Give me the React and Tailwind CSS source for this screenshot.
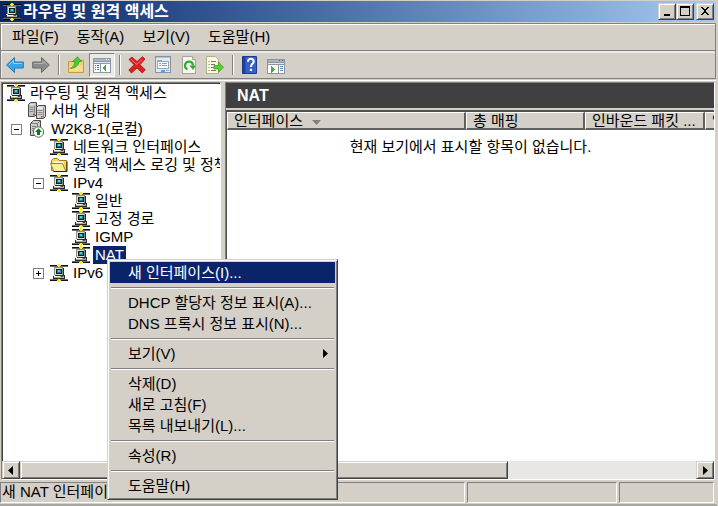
import { useState } from 'react';

const FONT = "font-['Liberation_Sans','Noto_Sans_CJK_KR',sans-serif]";
const RAISED =
  'bg-[#d4d0c8] border border-t-[#d4d0c8] border-l-[#d4d0c8] border-r-[#404040] border-b-[#404040] shadow-[inset_1px_1px_0_#fff,inset_-1px_-1px_0_#808080]';

function NodeIcon({ light }) {
  return (
    <svg viewBox="0 0 18 18" className="h-[18px] w-[18px] shrink-0" shapeRendering="crispEdges">
      <path d="M0 1h18v1H0zM0 16h18v1H0z" fill={light ? '#000' : '#111'} />
      <path d="M0 2h18v1H0zM0 15h18v1H0z" fill="#6e6e62" />
      <path d="M8 0h2v1H8zM7 1h4v1H7zM8 2h2v1H8zM8 15h2v1H8zM7 16h4v1H7zM8 17h2v1H8z" fill="#f8ec1c" />
      <path d="M4 3h9v1h1v7h1v4H3v-4h1z" fill="#2a2a2a" />
      <path d="M4 3h9v1H4zM4 4h1v7H4z" fill="#8d8d88" />
      <path d="M5 4h7v7H5z" fill="#dededa" />
      <path d="M12 4h1v7h-1z" fill="#8b8b86" />
      <path d="M6 5h6v5H6z" fill="#131a1a" />
      <path d="M7 6h4v3H7z" fill="#0c8c90" />
      <path d="M8 6h2v2H8z" fill="#35dcdc" />
      <path d="M4 12h10v2H4z" fill="#a9a9a4" />
      <path d="M3 11h2v1H3zM4 12h6v1H4z" fill="#f4f4f0" />
      <path d="M11 12h2v1h-2z" fill="#555" />
    </svg>
  );
}

function ServersIcon() {
  return (
    <svg viewBox="0 0 18 18" className="h-[18px] w-[18px] shrink-0">
      <path d="M.5 2.500l2-2h6v12l-2 2h-6z" fill="#c4c4c0" stroke="#4a4a4a" />
      <path d="M1 3.500h5.500v10M1.500 5.500h4M1.500 7.500h4M1.500 9.500h4" fill="none" stroke="#8a8a88" />
      <path d="M1.500 3h5" stroke="#fff" />
      <path d="M8.500 5.500l2-2h7v11l-2 2h-7z" fill="#d4d4d0" stroke="#4a4a4a" />
      <path d="M15.500 5.500v11M15.500 5.500l2-2M9.500 8.500h5M9.500 10.500h5M9.500 12.500h5" fill="none" stroke="#8a8a88" />
      <path d="M9.500 6h5.500" stroke="#fff" />
      <path d="M5 12h1.500v1.500H5zM13 14h1.500v1.500H13z" fill="#e82020" />
    </svg>
  );
}

function ServerUpIcon() {
  return (
    <svg viewBox="0 0 18 18" className="h-[18px] w-[18px] shrink-0">
      <path d="M2.500 3.500l3-3h7v12l-3 3h-7z" fill="#cfcfca" stroke="#4a4a4a" />
      <path d="M3 3.500h6.500v9M9.500 3.500l3-3M4 6.500h4M4 8.500h4M4 10.500h3" fill="none" stroke="#808080" />
      <circle cx="10.500" cy="12" r="5.200" fill="#fff" stroke="#666" />
      <path d="M10.500 8.300l3.500 3.700h-2v3H9v-3H7z" fill="#087a18" />
    </svg>
  );
}

function FolderIcon() {
  return (
    <svg viewBox="0 0 18 18" className="h-[18px] w-[18px] shrink-0">
      <path d="M1.500 14.500v-10l2-2h4l2 2h7v11z" fill="#f3d75f" stroke="#9a7b16" />
      <path d="M2.500 5.500h11v3h-9z" fill="#fffbe0" />
      <path d="M.5 7.500h12l3.500 8H4z" fill="#fbee94" stroke="#a3831c" />
      <path d="M3.500 15.500h13.500v-10" fill="none" stroke="#2b2410" />
    </svg>
  );
}

function ArrowIcon({ forward }) {
  return forward ? (
    <svg viewBox="0 0 18 18" className="h-[18px] w-[18px]">
      <path d="M.7 6h8.800V1.500L17.300 9l-7.800 7.500V12H.7z" fill="#8b8b8b" stroke="#6b6b6b" />
      <path d="M2 7.500h9V5l3.500 3.500" fill="none" stroke="#b3b3b3" />
    </svg>
  ) : (
    <svg viewBox="0 0 18 18" className="h-[18px] w-[18px]">
      <path d="M17.300 6H8.500V1.500L.7 9l7.800 7.500V12h8.800z" fill="#35a5ea" stroke="#2876b4" />
      <path d="M16 7.500H7.500V4.500L3 9" fill="none" stroke="#8dd6fb" />
    </svg>
  );
}

function UpFolderIcon() {
  return (
    <svg viewBox="0 0 18 18" className="h-[18px] w-[18px]">
      <path d="M1.500 16.500v-11h5l1 1.500h4V4.500h5v12z" fill="#f2cf73" stroke="#c99a3a" />
      <path d="M2.500 9.500h13v6h-13z" fill="#f8dd92" />
      <path d="M3 12.500C6.500 11 8 8 8 5.500H5.500L10.500.8l4 4.700h-2.500C12 9 8 12.500 3 12.500z" fill="#4cc934" stroke="#2f9a20" strokeWidth=".7" />
    </svg>
  );
}

function ConsoleTreeIcon() {
  return (
    <svg viewBox="0 0 20 18" className="h-[18px] w-5" shapeRendering="crispEdges">
      <path d="M1 2h18v15H1z" fill="#8f98a4" />
      <path d="M2 3h16v2H2z" fill="#a7b4c6" />
      <path d="M14 3h1v1h-1zM16 3h1v1h-1z" fill="#fff" />
      <path d="M2 6h16v1H2z" fill="#dfe5ec" />
      <path d="M2 8h6v8H2zM9 8h9v8H9z" fill="#fff" />
      <path d="M3 9h1v1H3zM3 11h1v1H3zM3 13h1v1H3zM5 9h2v1H5zM5 11h2v1H5zM5 13h2v1H5z" fill="#3f74b8" />
      <path d="M14 9v6h-1v-1h-1v-1h-1v-2h1v-1h1V9z" fill="#39b52a" />
    </svg>
  );
}

function DeleteIcon() {
  return (
    <svg viewBox="0 0 18 18" className="h-[18px] w-[18px]">
      <path d="M1 3.500 4 1l5 4.500L14.500.7 17 3 12 8.700l5.300 5-3 3.300L9 12l-5.500 5L.8 14 6 8.700z" fill="#e01f1f" stroke="#a81414" strokeWidth=".8" />
      <path d="M3 3.500l6 5 5-5" fill="none" stroke="#f47a6f" />
    </svg>
  );
}

function PropertiesIcon() {
  return (
    <svg viewBox="0 0 18 18" className="h-[18px] w-[18px]" shapeRendering="crispEdges">
      <path d="M1 0h16v17H1z" fill="#8593a5" />
      <path d="M2 1h14v15H2z" fill="#e4e9ef" />
      <path d="M2 1h14v1H2z" fill="#b4c1d0" />
      <path d="M3 4h5v1h7v8H3z" fill="#98a5b5" />
      <path d="M4 6h10v6H4z" fill="#fff" />
      <path d="M5 7h2v1H5zM8 7h5v1H8zM5 9h2v1H5zM8 9h5v1H8z" fill="#8fa0b4" />
      <path d="M7 14h4v2H7z" fill="#37b2e8" />
      <path d="M12 14h3v1h-3z" fill="#9cabbb" />
    </svg>
  );
}

function RefreshIcon() {
  return (
    <svg viewBox="0 0 18 18" className="h-[18px] w-[18px]">
      <path d="M2.500.5h10l3 3v14h-13z" fill="#f6f6f2" stroke="#a5a59e" />
      <path d="M12.500.5v3h3" fill="#ddd" stroke="#a5a59e" />
      <path d="M7.500 13.300A4 4 0 1 1 13 9.500" fill="none" stroke="#2fae2a" strokeWidth="2.200" />
      <path d="M9.500 9.500H16L13 14z" fill="#2fae2a" />
    </svg>
  );
}

function ExportIcon() {
  return (
    <svg viewBox="0 0 18 18" className="h-[18px] w-[18px]">
      <path d="M.5.5h9l3 3v14H.5z" fill="#fbf8df" stroke="#b3ad8e" />
      <path d="M2.500 5.500h1M5 5.500h5M2.500 8.500h1M5 8.500h4M2.500 11.500h1M5 11.500h3M2.500 14.500h1M5 14.500h5" stroke="#77786c" />
      <path d="M8 9.500h4.500V6l5 5.300-5 5V13H8z" fill="#58cf35" stroke="#3a9d24" strokeWidth=".7" />
    </svg>
  );
}

function HelpIcon() {
  return (
    <svg viewBox="0 0 18 18" className="h-[18px] w-[18px]">
      <path d="M1.500.5h14v17h-14z" fill="#3560cf" stroke="#20388a" />
      <path d="M2 1h2.500v16H2z" fill="#20409f" />
      <path d="M7 5.800C7 3.500 8.300 2.800 9.800 2.800c1.600 0 2.900.9 2.900 2.600C12.700 7.700 9.900 8 9.900 11" fill="none" stroke="#fff" strokeWidth="2" />
      <path d="M8.900 12.800h2.100V15H8.900z" fill="#fff" />
    </svg>
  );
}

function ActionPaneIcon() {
  return (
    <svg viewBox="0 0 20 18" className="h-[18px] w-5" shapeRendering="crispEdges">
      <path d="M1 3h18v15H1z" fill="#8d949c" />
      <path d="M2 4h16v2H2z" fill="#a9b2bd" />
      <path d="M13 4h1v1h-1zM16 4h1v1h-1z" fill="#56606c" />
      <path d="M2 7h16v1H2z" fill="#e3e7eb" />
      <path d="M2 9h10v8H2zM13 9h5v8h-5z" fill="#fff" />
      <path d="M5 10h1v1h1v1h1v1h1v1H8v1H7v1H6v1H5z" fill="#39b52a" />
      <path d="M14 10h3v1h-3zM14 12h3v1h-3zM14 14h3v1h-3z" fill="#5b8bc4" />
    </svg>
  );
}

const treeItems = [
  { level: 0, label: '라우팅 및 원격 액세스', Icon: NodeIcon },
  { level: 1, label: '서버 상태', Icon: ServersIcon },
  { level: 1, label: 'W2K8-1(로컬)', Icon: ServerUpIcon, toggle: 'open' },
  { level: 2, label: '네트워크 인터페이스', Icon: NodeIcon },
  { level: 2, label: '원격 액세스 로깅 및 정책', Icon: FolderIcon },
  { level: 2, label: 'IPv4', Icon: NodeIcon, toggle: 'open' },
  { level: 3, label: '일반', Icon: NodeIcon },
  { level: 3, label: '고정 경로', Icon: NodeIcon },
  { level: 3, label: 'IGMP', Icon: NodeIcon },
  { level: 3, label: 'NAT', Icon: NodeIcon },
  { level: 2, label: 'IPv6', Icon: NodeIcon, toggle: 'closed' },
];

const indents = ['pl-1', 'pl-[8px]', 'pl-[30px]', 'pl-[69px]'];

const menuGroups = [
  ['새 인터페이스(I)...'],
  ['DHCP 할당자 정보 표시(A)...', 'DNS 프록시 정보 표시(N)...'],
  ['보기(V)'],
  ['삭제(D)', '새로 고침(F)', '목록 내보내기(L)...'],
  ['속성(R)'],
  ['도움말(H)'],
];

function Expander({ open }) {
  return (
    <button aria-label={open ? '축소' : '확장'} className="mr-[6px] flex h-[11px] w-[11px] shrink-0 items-center justify-center border border-[#808080] bg-white">
      <svg viewBox="0 0 7 7" className="h-[7px] w-[7px]" shapeRendering="crispEdges">
        <path d={open ? 'M1 3h5v1H1z' : 'M1 3h5v1H1zM3 1h1v5H3z'} />
      </svg>
    </button>
  );
}

function TreeRow({ item, selected, onSelect }) {
  const { level, label, Icon, toggle } = item;
  return (
    <li className={`flex h-[18px] items-center ${indents[level]}`}>
      {toggle ? <Expander open={toggle === 'open'} /> : (level === 1 || level === 2) && <span className="w-[17px] shrink-0" />}
      <Icon />
      <button
        onClick={onSelect}
        className={`ml-[3px] h-[18px] px-[2px] text-left leading-[18px] whitespace-nowrap ${selected ? 'bg-[#0a246a] text-white' : ''}`}
      >
        {label}
      </button>
    </li>
  );
}

function CaptionButton({ label, children }) {
  return (
    <button aria-label={label} className={`flex h-[17px] w-[18px] items-center justify-center ${RAISED}`}>
      <svg viewBox="0 0 12 11" className="h-[11px] w-3" shapeRendering="crispEdges">{children}</svg>
    </button>
  );
}

function ToolButton({ label, pressed, children }) {
  return (
    <button
      aria-label={label}
      className={`flex h-6 w-[26px] items-center justify-center ${pressed ? 'border border-t-[#808080] border-l-[#808080] border-r-white border-b-white bg-[#ebe9e4]' : ''}`}
    >
      {children}
    </button>
  );
}

function ToolSeparator() {
  return <span className="mr-[3px] ml-1 h-5 w-[2px] border-l border-l-[#808080] bg-white" />;
}

function ScrollButton({ label, right }) {
  return (
    <button aria-label={label} className={`flex w-[18px] shrink-0 items-center justify-center ${RAISED}`}>
      <svg viewBox="0 0 8 9" className="h-[9px] w-2">
        <path d={right ? 'M2 0l5 4.500L2 9z' : 'M6 0L1 4.500 6 9z'} />
      </svg>
    </button>
  );
}

function ScrollBar({ thumb }) {
  return (
    <div className="flex h-[18px] shrink-0 bg-[#e9e7e3]">
      <ScrollButton label="왼쪽으로 스크롤" />
      <div className="flex flex-1">
        <div className={`${thumb} ${RAISED}`} />
      </div>
      <ScrollButton label="오른쪽으로 스크롤" right />
    </div>
  );
}

function ContextMenu() {
  return (
    <div
      role="menu"
      className="absolute top-[258px] left-[107px] w-[231px] border border-t-[#d4d0c8] border-l-[#d4d0c8] border-r-[#404040] border-b-[#404040] bg-[#d4d0c8] p-[2px] pb-[3px] shadow-[inset_1px_1px_0_#fff,inset_-1px_-1px_0_#808080]"
    >
      {menuGroups.map((group, i) => (
        <div key={group[0]}>
          {i > 0 && (
            <div className="flex h-[9px] items-center px-px">
              <hr className="h-[2px] w-full border-t border-t-[#808080] bg-white" />
            </div>
          )}
          {group.map((label) => (
            <button
              key={label}
              role="menuitem"
              className={`flex h-[21px] w-full items-center justify-between pr-[7px] pl-[18px] text-left ${i === 0 ? 'bg-[#0a246a] text-white' : ''}`}
            >
              {label}
              {label === '보기(V)' && (
                <svg viewBox="0 0 5 9" className="h-[9px] w-[5px]">
                  <path d="M0 0l5 4.500L0 9z" />
                </svg>
              )}
            </button>
          ))}
        </div>
      ))}
    </div>
  );
}

const headCell =
  'h-[18px] overflow-hidden border-t border-r-2 border-b-2 border-l border-t-white border-l-white border-r-[#606060] border-b-[#606060] bg-[#d4d0c8] pl-[6px] text-left leading-[15px] font-normal whitespace-nowrap last:border-r-0';

export default function App() {
  const [selected, setSelected] = useState('NAT');

  return (
    <div className={`relative flex h-screen min-h-[500px] flex-col overflow-hidden border-t border-r-2 border-b-2 border-t-[#d4d0c8] border-r-[#d4d0c8] border-b-[#a8a6a0] bg-[#d4d0c8] text-[15px] leading-[18px] text-black ${FONT}`}>
      <header className="flex h-[21px] shrink-0 items-center bg-linear-to-r from-[#0a246a] to-[#a6caf0] pr-[2px] pl-[3px]">
        <NodeIcon light />
        <h1 className="ml-[2px] flex-1 text-[16px] font-bold text-white">라우팅 및 원격 액세스</h1>
        <CaptionButton label="최소화">
          <path d="M3 8h6v2H3z" />
        </CaptionButton>
        <CaptionButton label="최대화">
          <path d="M1 0h10v10H1zM2 2v7h8V2z" fillRule="evenodd" />
        </CaptionButton>
        <span className="w-[2px]" />
        <CaptionButton label="닫기">
          <path d="M2 1h2v1h1v1h2V2h1V1h2v1H9v1H8v1H7v2h1v1h1v1h1v1H8V8H7V7H5v1H4v1H2V8h1V7h1V6h1V4H4V3H3V2H2z" />
        </CaptionButton>
      </header>

      <div className="mt-px shrink-0 border border-[#808080]">
        <nav className="flex h-[26px] items-center gap-[18px] border-t border-l border-white pb-[2px] pl-[10px]">
          {['파일(F)', '동작(A)', '보기(V)', '도움말(H)'].map((label) => (
            <button key={label}>{label}</button>
          ))}
        </nav>
        <div className="flex h-7 items-center border-t border-t-[#808080] pl-px shadow-[inset_1px_2px_0_#ebe9e4]">
          <ToolButton label="뒤로"><ArrowIcon /></ToolButton>
          <ToolButton label="앞으로"><ArrowIcon forward /></ToolButton>
          <ToolSeparator />
          <ToolButton label="한 수준 위로"><UpFolderIcon /></ToolButton>
          <ToolButton label="콘솔 트리 표시" pressed><ConsoleTreeIcon /></ToolButton>
          <ToolSeparator />
          <ToolButton label="삭제"><DeleteIcon /></ToolButton>
          <ToolButton label="속성"><PropertiesIcon /></ToolButton>
          <ToolButton label="새로 고침"><RefreshIcon /></ToolButton>
          <ToolButton label="목록 내보내기"><ExportIcon /></ToolButton>
          <ToolSeparator />
          <ToolButton label="도움말"><HelpIcon /></ToolButton>
          <ToolButton label="작업 창 표시"><ActionPaneIcon /></ToolButton>
        </div>
      </div>

      <main className="mt-px flex min-h-0 flex-1 gap-[4px] border-t border-t-white pt-px pr-px pl-px">
        <section className="flex w-[220px] shrink-0 flex-col overflow-hidden border border-t-[#808080] border-r-white border-b-white border-l-[#808080]">
          <ul className="min-h-0 flex-1 overflow-hidden border-t border-l border-[#404040] bg-white">
            {treeItems.map((item) => (
              <TreeRow key={item.label} item={item} selected={selected === item.label} onSelect={() => setSelected(item.label)} />
            ))}
          </ul>
          <ScrollBar thumb="w-[150px]" />
        </section>

        <section className="flex min-w-0 flex-1 flex-col border border-t-[#808080] border-r-white border-b-white border-l-[#808080]">
          <h2 className="flex h-[25px] shrink-0 items-center bg-[#404040] pl-[11px] text-[16px] font-bold text-white">NAT</h2>
          <div className="mt-[2px] flex min-h-0 flex-1 flex-col border-t-2 border-l border-[#505050] bg-white">
            <table className="w-full table-fixed border-separate border-spacing-0">
              <colgroup>
                <col className="w-[239px]" />
                <col className="w-[119px]" />
                <col className="w-[120px]" />
                <col />
              </colgroup>
              <thead>
                <tr>
                  <th className={headCell}>
                    인터페이스
                    <svg viewBox="0 0 9 5" className="ml-[9px] inline h-[5px] w-[9px]"><path d="M0 0h9L4.500 5z" fill="#808080" /></svg>
                  </th>
                  <th className={headCell}>총 매핑</th>
                  <th className={headCell}>인바운드 패킷 ...</th>
                  <th className={headCell}>인바운드</th>
                </tr>
              </thead>
              <tbody>
                <tr>
                  <td colSpan={4} className="pt-[8px] text-center leading-[18px]">현재 보기에서 표시할 항목이 없습니다.</td>
                </tr>
              </tbody>
            </table>
            <div className="flex-1" />
            <ScrollBar thumb="w-[263px]" />
          </div>
        </section>
      </main>

      <footer className="mt-[2px] mb-px flex h-[21px] shrink-0 gap-[2px] pr-[2px]">
        <div className="flex-1 overflow-hidden border border-t-[#808080] border-r-white border-b-white border-l-[#808080] pl-px leading-[18px] whitespace-nowrap">
          새 NAT 인터페이스
        </div>
        <div className="w-[150px] border border-t-[#808080] border-r-white border-b-white border-l-[#808080]" />
        <div className="w-[95px] border border-t-[#808080] border-r-white border-b-white border-l-[#808080]" />
      </footer>

      <ContextMenu />
    </div>
  );
}
